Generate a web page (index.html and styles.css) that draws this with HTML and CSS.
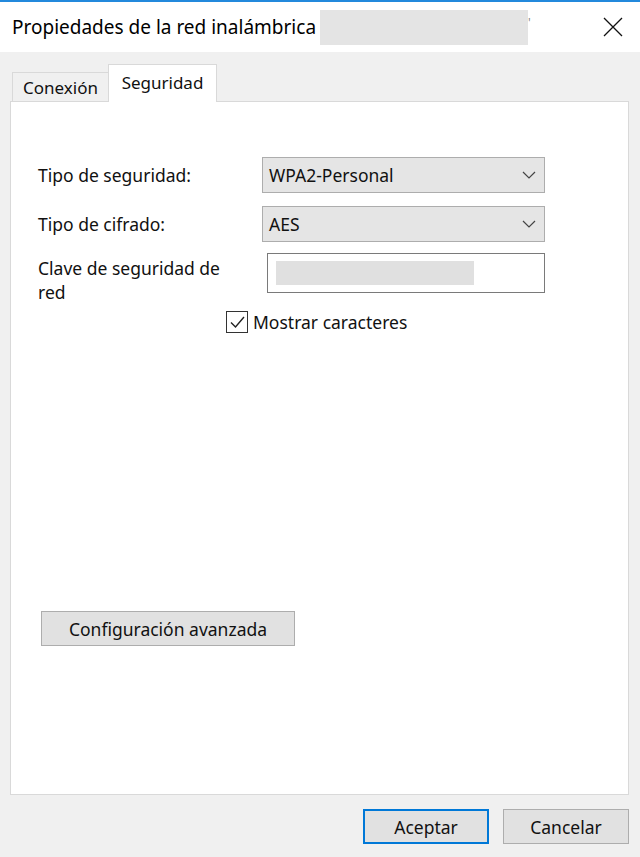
FILE: index.html
```html
<!DOCTYPE html>
<html lang="es">
<head>
<meta charset="utf-8">
<title>Propiedades de la red inalámbrica</title>
<link rel="stylesheet" href="styles.css">
</head>
<body>
<div class="window">
  <div class="titlebar">
    <span class="title">Propiedades de la red inalámbrica</span>
    <span class="blur title-blur"></span>
    <span class="tick">'</span>
    <svg class="close" width="20" height="20" viewBox="0 0 20 20"><path d="M1 1 L19 19 M19 1 L1 19" stroke="#111" stroke-width="1.3" fill="none"/></svg>
  </div>
  <div class="body">
    <div class="tabs">
      <div class="tab">Conexión</div>
      <div class="tab active">Seguridad</div>
    </div>
    <div class="panel">
      <div class="form">
        <label class="lbl">Tipo de seguridad:</label>
        <div class="select"><span>WPA2-Personal</span><svg class="chev" width="14" height="8" viewBox="0 0 14 8"><path d="M1 1 L7 7 L13 1" stroke="#444" stroke-width="1.2" fill="none"/></svg></div>
        <label class="lbl">Tipo de cifrado:</label>
        <div class="select"><span>AES</span><svg class="chev" width="14" height="8" viewBox="0 0 14 8"><path d="M1 1 L7 7 L13 1" stroke="#444" stroke-width="1.2" fill="none"/></svg></div>
        <label class="lbl lbl-wrap">Clave de seguridad de red</label>
        <div class="input"><span class="blur key-blur"></span></div>
      </div>
      <div class="check-row">
        <span class="checkbox"><svg width="19" height="19" viewBox="0 0 19 19"><path d="M3 9.5 L7.5 14 L16 4" stroke="#222" stroke-width="1.4" fill="none"/></svg></span>
        <span>Mostrar caracteres</span>
      </div>
      <button class="btn adv">Configuración avanzada</button>
    </div>
    <div class="footer">
      <button class="btn primary">Aceptar</button>
      <button class="btn">Cancelar</button>
    </div>
  </div>
</div>
</body>
</html>
```
FILE: styles.css
```css
* { box-sizing: border-box; }
html, body { margin: 0; padding: 0; }
body {
  width: 640px;
  height: 857px;
  background: #f0f0f0;
  font-family: "Noto Sans", "Open Sans", sans-serif;
  font-size: 17.5px;
  color: #111;
  overflow: hidden;
}
.window {
  border-top: 2px solid #2389dc;
  height: 857px;
}
.titlebar {
  height: 50px;
  background: #fff;
  display: flex;
  align-items: center;
  padding-left: 12px;
  padding-right: 17px;
}
.title {
  font-size: 19px;
  color: #000;
  white-space: nowrap;
}
.blur {
  display: inline-block;
  background: #e4e4e4;
}
.title-blur {
  width: 208px;
  height: 35px;
  margin-left: 4px;
}
.tick {
  font-size: 12px;
  color: #888;
  align-self: flex-start;
  margin-top: 12px;
}
.close { margin-left: auto; }
.body {
  padding: 12px 11px 0 10px;
}
.tabs {
  display: flex;
  align-items: flex-end;
  padding-left: 2px;
  height: 37px;
}
.tab {
  height: 29px;
  width: 96px;
  border: 1px solid #d9d9d9;
  border-bottom: none;
  border-right: none;
  background: #f0f0f0;
  display: flex;
  align-items: center;
  justify-content: center;
  font-size: 17px;
}
.tab.active {
  height: 38px;
  width: 109px;
  background: #fff;
  border-right: 1px solid #d9d9d9;
  margin-bottom: -1px;
  position: relative;
  z-index: 1;
  align-items: flex-start;
  padding-top: 6px;
}
.panel {
  height: 694px;
  background: #fff;
  border: 1px solid #d9d9d9;
  padding: 55px 0 0 27px;
}
.form {
  display: grid;
  grid-template-columns: 224px 283px;
  row-gap: 13px;
  align-items: center;
}
.lbl-wrap {
  align-self: start;
  width: 200px;
  line-height: 24px;
  margin-top: 1px;
}
.select {
  height: 36px;
  background: #e5e5e5;
  border: 1px solid #adadad;
  display: flex;
  align-items: center;
  justify-content: space-between;
  padding: 0 8px 0 6px;
}
.input {
  align-self: start;
  height: 40px;
  margin-left: 5px;
  margin-top: -2px;
  background: #fff;
  border: 1px solid #7a7a7a;
  display: flex;
  align-items: center;
  padding-left: 8px;
}
.key-blur {
  width: 198px;
  height: 24px;
  background: #e0e0e0;
}
.check-row {
  display: flex;
  align-items: center;
  gap: 5px;
  margin: 7px 0 0 188px;
  height: 22px;
}
.checkbox {
  width: 22px;
  height: 22px;
  border: 1px solid #333;
  background: #fff;
  display: flex;
  align-items: center;
  justify-content: center;
}
.btn {
  font-family: inherit;
  font-size: 17.5px;
  color: #111;
  background: #e1e1e1;
  border: 1px solid #adadad;
  height: 35px;
  padding: 0;
}
.adv {
  display: block;
  width: 254px;
  margin: 278px 0 0 3px;
}
.footer {
  display: flex;
  justify-content: flex-end;
  gap: 14px;
  margin-top: 14px;
}
.footer .btn { width: 126px; }
.primary {
  border: 2px solid #0078d7;
}
```
